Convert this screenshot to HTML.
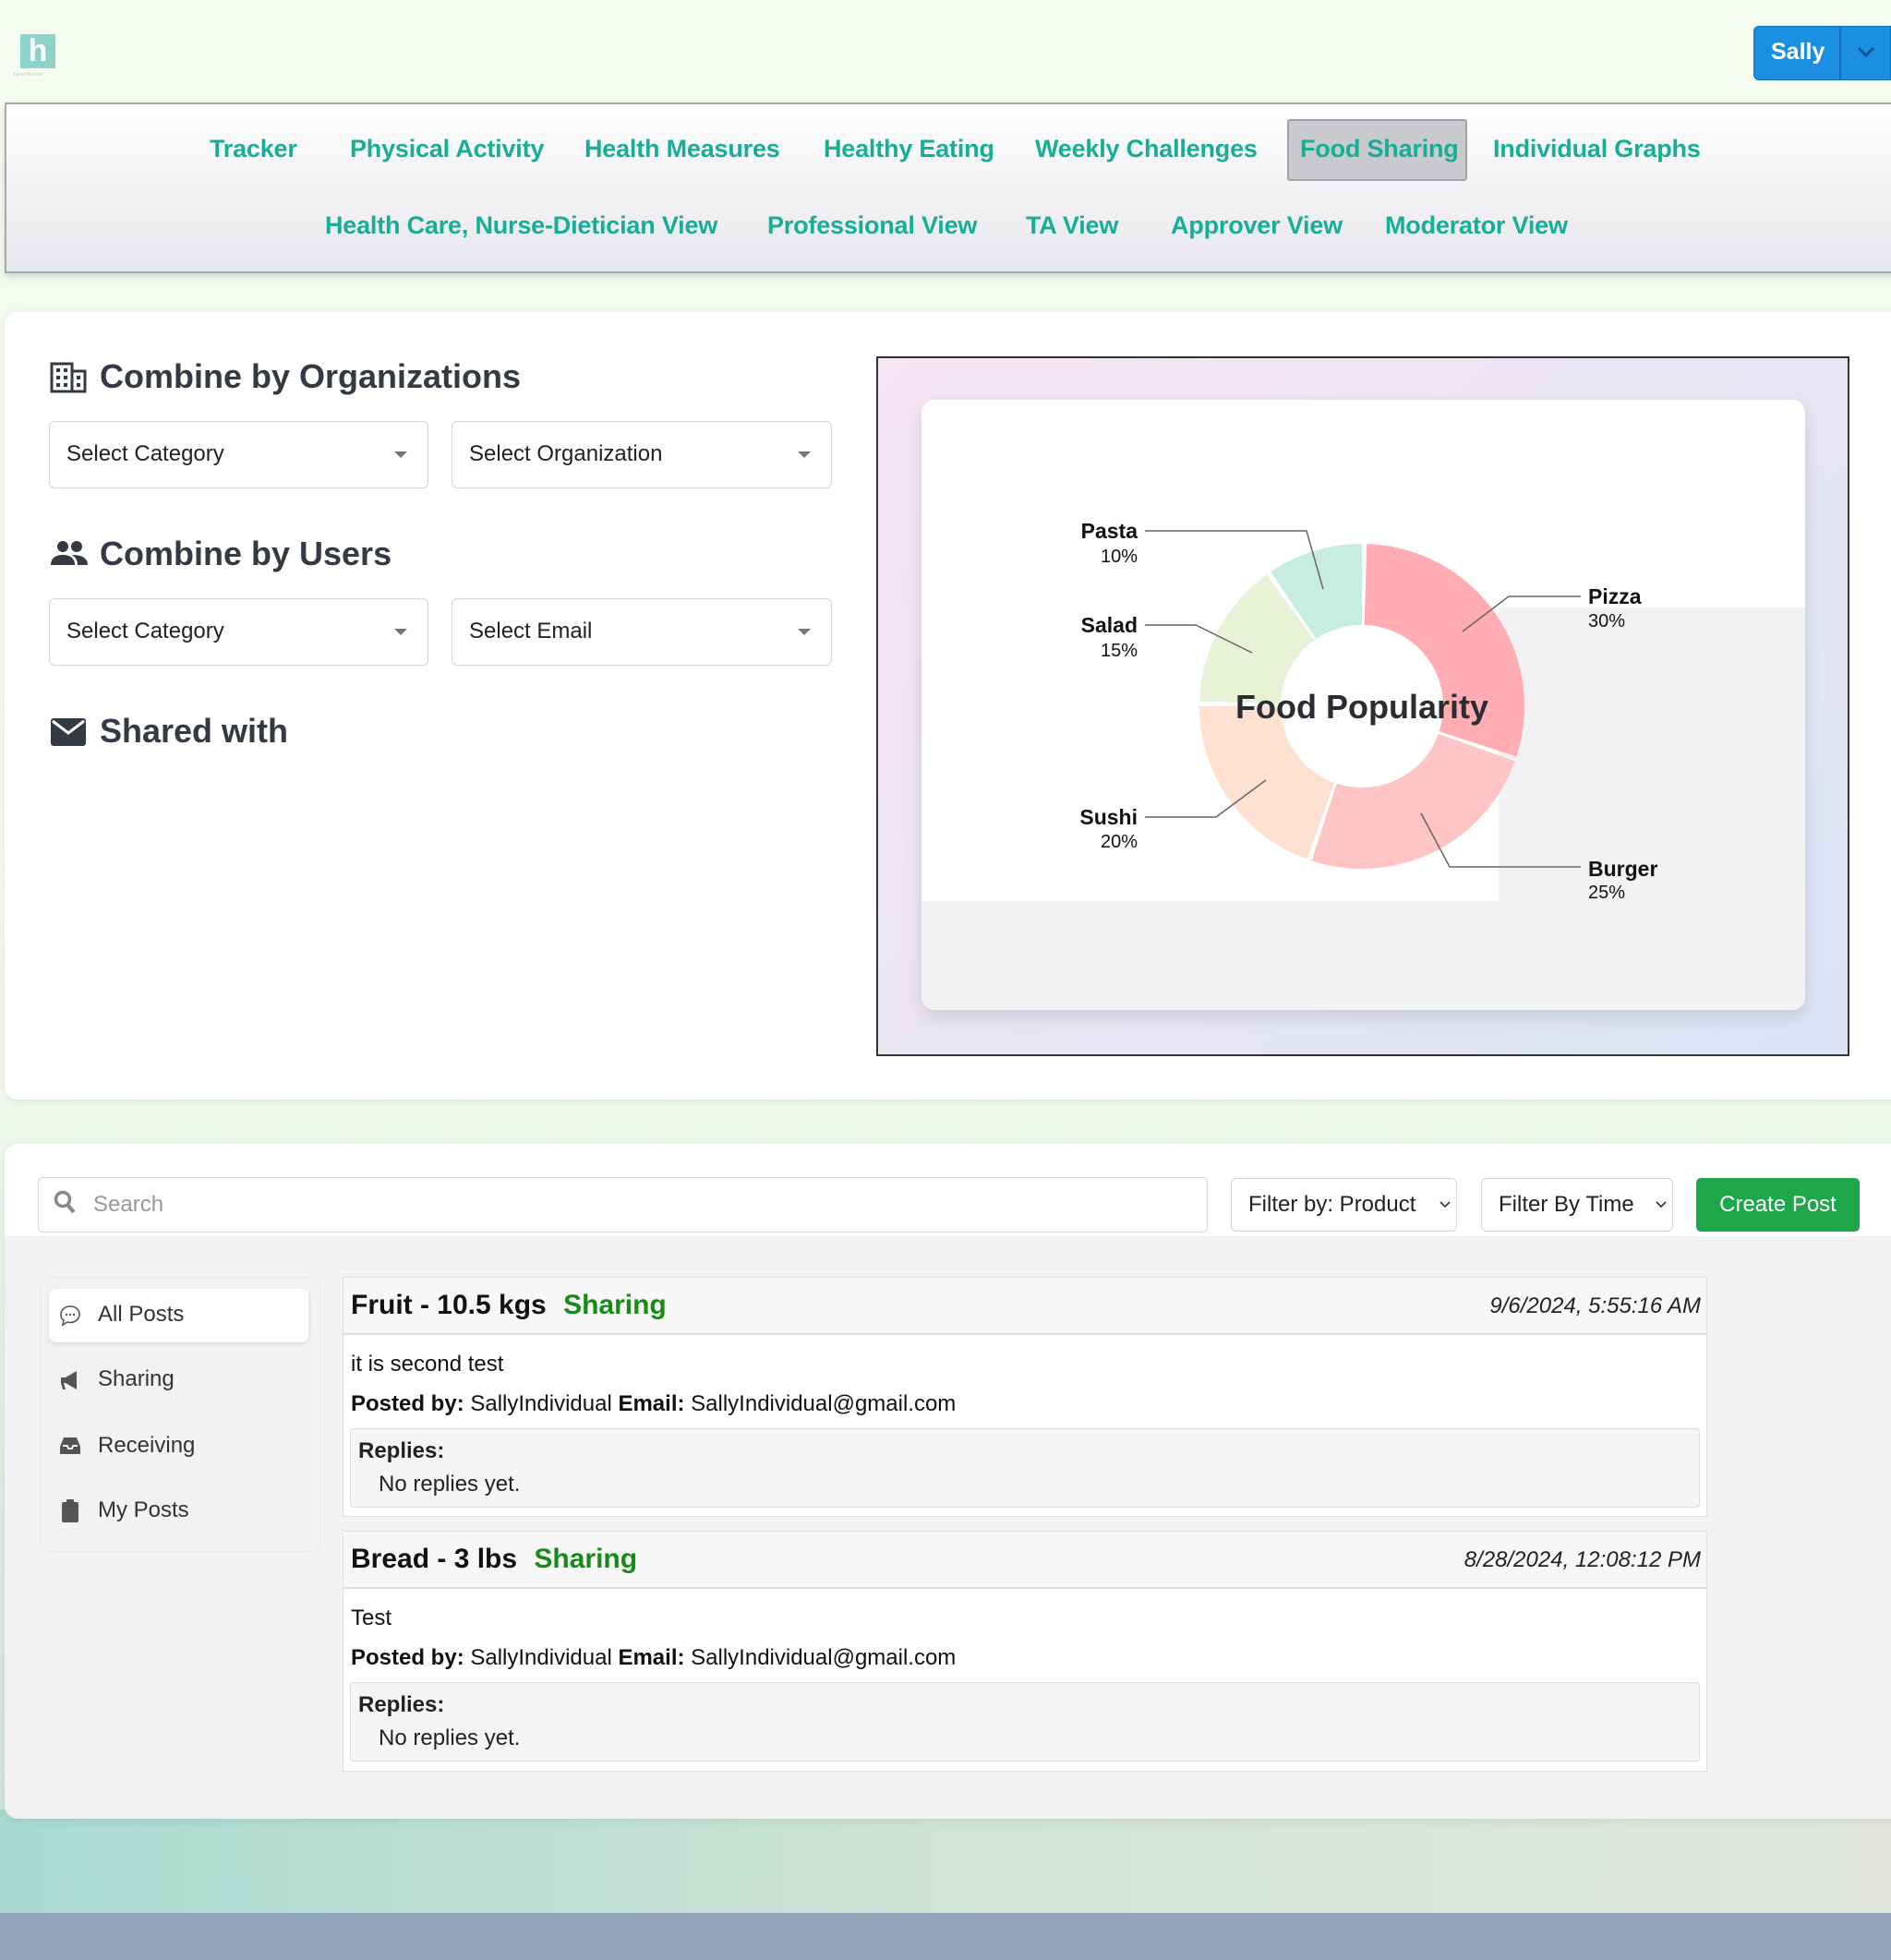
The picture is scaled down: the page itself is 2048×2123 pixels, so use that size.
<!DOCTYPE html>
<html><head><meta charset="utf-8"><style>
*{box-sizing:border-box;margin:0;padding:0}
body{width:2048px;height:2123px;position:relative;overflow:hidden;font-family:"Liberation Sans",Arial,sans-serif;background:linear-gradient(180deg,#f5fdf1 0%,#f1f9ee 55%,#e3f0e6 70%,#cfe6dc 92%,#b9ddd1 97%);color:#222}
.a{position:absolute}
.nav a{position:absolute;color:#16ae96;font-size:27px;text-decoration:none;white-space:nowrap;font-weight:bold;letter-spacing:-0.2px}
.sel{position:absolute;border:1.5px solid #d4d4d8;border-radius:6px;background:#fff;font-size:24px;color:#222;padding-left:18px;line-height:70px}
.sel.c::after{content:"";position:absolute;right:22px;top:32px;border-left:7px solid transparent;border-right:7px solid transparent;border-top:7px solid #777}
.h2{position:absolute;font-size:36px;font-weight:bold;color:#333a44}
.side{position:absolute;left:106px;font-size:24px;color:#333}
.post{position:absolute;left:371px;width:1478px;background:#fff;border:1.5px solid #e0e0e0}
.ph{height:62px;background:#f7f7f7;border-bottom:2px solid #ddd;position:relative}
.ph .t{position:absolute;left:8px;top:13px;font-size:30px;font-weight:bold;color:#111}
.ph .t span{color:#178a17;margin-left:10px}
.ph .d{position:absolute;right:6px;top:17px;font-size:24px;font-style:italic;color:#222}
.pb{font-size:24px;padding:0 8px;color:#111}
.rep{border:1.5px solid #ddd;background:#f5f5f5;border-radius:4px;padding:10px 8px;font-size:24px}
</style></head><body>
<div class="a" style="left:22px;top:37px;width:38px;height:37px;background:#8ed3c8;color:#fff;font-size:34px;text-align:center;line-height:36px;font-weight:bold">h</div>
<div class="a" style="left:15px;top:78px;font-size:5px;color:#bbb;letter-spacing:1px">healthnow</div>
<div class="a" style="left:1899px;top:28px;width:149px;height:59px;background:#1b8fe0;border:1.5px solid #1273c4;border-radius:6px 0 0 6px"></div>
<div class="a" style="left:1918px;top:42px;color:#fff;font-size:25px;font-weight:bold">Sally</div>
<div class="a" style="left:1992px;top:28px;width:2px;height:59px;background:#136fc0"></div>
<svg class="a" style="left:2010px;top:48px" width="22" height="16"><path d="M3 4 L11 12 L19 4" stroke="#0b4f99" stroke-width="3" fill="none"/></svg>
<div class="a" style="left:5px;top:111px;width:2050px;height:185px;background:linear-gradient(180deg,#fefefe,#e8e8ec);border:2px solid #a9a9ad;box-shadow:0 4px 8px rgba(0,0,0,.15)"></div>
<div class="a" style="left:1394px;top:129px;width:195px;height:67px;background:#c8cacd;border:2px solid #9fa2a6;border-radius:3px"></div>
<div class="nav">
<a style="left:227px;top:146px">Tracker</a>
<a style="left:379px;top:146px">Physical Activity</a>
<a style="left:633px;top:146px">Health Measures</a>
<a style="left:892px;top:146px">Healthy Eating</a>
<a style="left:1121px;top:146px">Weekly Challenges</a>
<a style="left:1408px;top:146px">Food Sharing</a>
<a style="left:1617px;top:146px">Individual Graphs</a>
<a style="left:352px;top:229px">Health Care, Nurse-Dietician View</a>
<a style="left:831px;top:229px">Professional View</a>
<a style="left:1111px;top:229px">TA View</a>
<a style="left:1268px;top:229px">Approver View</a>
<a style="left:1500px;top:229px">Moderator View</a>
</div>
<div class="a" style="left:5px;top:338px;width:2060px;height:853px;background:#fff;border-radius:14px;box-shadow:0 2px 10px rgba(0,0,0,.08)"></div>
<svg class="a" style="left:54px;top:390px" width="40" height="36" viewBox="0 0 40 36"><path d="M2 4h22v30H2z M24 12h14v22H24z" fill="none" stroke="#333a44" stroke-width="3"/><g fill="#333a44"><rect x="7" y="9" width="4" height="4"/><rect x="15" y="9" width="4" height="4"/><rect x="7" y="17" width="4" height="4"/><rect x="15" y="17" width="4" height="4"/><rect x="7" y="25" width="4" height="4"/><rect x="15" y="25" width="4" height="4"/><rect x="29" y="17" width="4" height="4"/><rect x="29" y="25" width="4" height="4"/></g></svg>
<div class="h2" style="left:108px;top:387px">Combine by Organizations</div>
<div class="sel c" style="left:53px;top:456px;width:411px;height:73px">Select Category</div>
<div class="sel c" style="left:489px;top:456px;width:412px;height:73px">Select Organization</div>
<svg class="a" style="left:53px;top:584px" width="44" height="32" viewBox="0 0 44 32"><g fill="#333a44"><circle cx="15" cy="8" r="6"/><circle cx="30" cy="8" r="6"/><path d="M2 28c0-8 6-11 13-11s13 3 13 11z"/><path d="M25 17c8 0 17 2 17 11H31c0-5-2-8-6-11z"/></g></svg>
<div class="h2" style="left:108px;top:579px">Combine by Users</div>
<div class="sel c" style="left:53px;top:648px;width:411px;height:73px">Select Category</div>
<div class="sel c" style="left:489px;top:648px;width:412px;height:73px">Select Email</div>
<svg class="a" style="left:54px;top:777px" width="40" height="32" viewBox="0 0 40 32"><rect x="1" y="1" width="38" height="30" rx="3" fill="#333a44"/><path d="M3 4 L20 17 L37 4" stroke="#fff" stroke-width="3" fill="none"/></svg>
<div class="h2" style="left:108px;top:771px">Shared with</div>
<div class="a" style="left:949px;top:386px;width:1054px;height:758px;border:2px solid #333;background:linear-gradient(135deg,#f6e5f2,#e8e6f4 55%,#dbe5f6)"></div>
<div class="a" style="left:998px;top:433px;width:957px;height:661px;background:#fff;border-radius:14px;box-shadow:0 8px 20px rgba(0,0,0,.12);overflow:hidden">
<div class="a" style="left:625px;top:225px;width:340px;height:320px;background:#f2f2f4"></div>
<div class="a" style="left:0;top:543px;width:960px;height:120px;background:#f2f2f4"></div>
</div>
<svg class="a" style="left:0;top:0" width="2048" height="1200">
<g transform="rotate(-90 1475 765)" fill="none" stroke-width="88">
<circle cx="1475" cy="765" r="132" stroke="#ffadb3" stroke-dasharray="244.8 829" stroke-dashoffset="-4"/>
<circle cx="1475" cy="765" r="132" stroke="#ffc4c4" stroke-dasharray="203.3 829" stroke-dashoffset="-252.8"/>
<circle cx="1475" cy="765" r="132" stroke="#ffe1d1" stroke-dasharray="161.9 829" stroke-dashoffset="-460.1"/>
<circle cx="1475" cy="765" r="132" stroke="#e8f2d7" stroke-dasharray="120.4 829" stroke-dashoffset="-626"/>
<circle cx="1475" cy="765" r="132" stroke="#c7ece0" stroke-dasharray="78.9 829" stroke-dashoffset="-750.4"/>
</g>
<circle cx="1475" cy="765" r="88" fill="#fff"/>
<g stroke="#666" stroke-width="1.5" fill="none">
<path d="M1240 575H1415L1433 638"/><path d="M1240 677H1295L1356 707"/><path d="M1240 885H1317L1371 845"/>
<path d="M1712 646H1634L1584 684"/><path d="M1712 939H1570L1539 881"/>
</g>
<g font-family="Liberation Sans,Arial,sans-serif" font-size="23" fill="#111">
<g font-weight="bold" text-anchor="end"><text x="1232" y="583">Pasta</text><text x="1232" y="685">Salad</text><text x="1232" y="893">Sushi</text></g>
<g text-anchor="end" font-size="20"><text x="1232" y="609">10%</text><text x="1232" y="711">15%</text><text x="1232" y="918">20%</text></g>
<g font-weight="bold"><text x="1720" y="654">Pizza</text><text x="1720" y="949">Burger</text></g>
<g font-size="20"><text x="1720" y="679">30%</text><text x="1720" y="973">25%</text></g>
<text x="1475" y="778" text-anchor="middle" font-size="36" font-weight="bold" fill="#2a2e33">Food Popularity</text>
</g>
</svg>
<div class="a" style="left:0;top:1960px;width:2048px;height:112px;background:linear-gradient(90deg,#a9dacf,#cfe3d6 50%,#e2e6de)"></div>
<div class="a" style="left:5px;top:1239px;width:2060px;height:731px;background:#f2f2f4;border-radius:14px;overflow:hidden;box-shadow:0 2px 10px rgba(0,0,0,.08)">
<div class="a" style="left:0;top:0;width:2060px;height:100px;background:#fff"></div>
</div>
<div class="a" style="left:41px;top:1275px;width:1267px;height:60px;border:1.5px solid #d4d4d8;border-radius:5px;background:#fff"></div>
<svg class="a" style="left:58px;top:1289px" width="26" height="28" viewBox="0 0 26 28"><circle cx="10" cy="10" r="7.5" stroke="#888" stroke-width="3.5" fill="none"/><path d="M15 16l7 8" stroke="#888" stroke-width="4"/></svg>
<div class="a" style="left:101px;top:1291px;font-size:24px;color:#999">Search</div>
<div class="sel" style="left:1333px;top:1276px;width:245px;height:58px;line-height:56px;padding-left:18px">Filter by: Product</div>
<svg class="a" style="left:1558px;top:1300px" width="14" height="10"><path d="M2 2l5 5 5-5" stroke="#333" stroke-width="1.6" fill="none"/></svg>
<div class="sel" style="left:1604px;top:1276px;width:208px;height:58px;line-height:56px;padding-left:18px">Filter By Time</div>
<svg class="a" style="left:1792px;top:1300px" width="14" height="10"><path d="M2 2l5 5 5-5" stroke="#333" stroke-width="1.6" fill="none"/></svg>
<div class="a" style="left:1837px;top:1276px;width:177px;height:58px;background:#1da64a;border-radius:5px;color:#fff;font-size:24px;text-align:center;line-height:58px">Create Post</div>
<div class="a" style="left:43px;top:1383px;width:304px;height:298px;background:#f2f2f4;border:1.5px solid #eaeaec;border-radius:10px"></div>
<div class="a" style="left:53px;top:1396px;width:281px;height:58px;background:#fff;border-radius:8px;box-shadow:0 2px 5px rgba(0,0,0,.1)"></div>
<svg class="a" style="left:64px;top:1413px" width="24" height="24" viewBox="0 0 24 24"><path d="M12 2C6 2 2 6 2 11c0 3 1 5 3 6l-1 5 5-3c1 0 2 .5 3 .5 6 0 10-4 10-9S18 2 12 2z" fill="none" stroke="#555" stroke-width="1.6"/><circle cx="8" cy="11" r="1.2" fill="#555"/><circle cx="12" cy="11" r="1.2" fill="#555"/><circle cx="16" cy="11" r="1.2" fill="#555"/></svg>
<div class="side" style="top:1410px">All Posts</div>
<svg class="a" style="left:64px;top:1483px" width="24" height="24" viewBox="0 0 24 24"><path d="M2 9h5l12-7v20L7 15H5l2 7H4l-2-7z" fill="#555"/></svg>
<div class="side" style="top:1480px">Sharing</div>
<svg class="a" style="left:64px;top:1555px" width="24" height="22" viewBox="0 0 24 22"><path d="M5 2h14l4 10v8H1v-8z" fill="#555"/><path d="M4 11h5l1 3h4l1-3h5" stroke="#fff" stroke-width="1.8" fill="none"/></svg>
<div class="side" style="top:1552px">Receiving</div>
<svg class="a" style="left:66px;top:1623px" width="20" height="26" viewBox="0 0 20 26"><rect x="1" y="4" width="18" height="22" rx="2" fill="#555"/><rect x="6" y="1" width="8" height="6" rx="1" fill="#555"/></svg>
<div class="side" style="top:1622px">My Posts</div>
<div class="post" style="top:1383px;height:260px">
<div class="ph"><div class="t">Fruit - 10.5 kgs <span>Sharing</span></div><div class="d">9/6/2024, 5:55:16 AM</div></div>
<div class="pb" style="margin-top:18px">it is second test</div>
<div class="pb" style="margin-top:15px"><b>Posted by:</b> SallyIndividual <b>Email:</b> SallyIndividual@gmail.com</div>
<div style="padding:12px 7px 0 7px"><div class="rep"><b>Replies:</b><div style="margin:8px 0 0 22px">No replies yet.</div></div></div>
</div>
<div class="post" style="top:1658px;height:261px">
<div class="ph"><div class="t">Bread - 3 lbs <span>Sharing</span></div><div class="d">8/28/2024, 12:08:12 PM</div></div>
<div class="pb" style="margin-top:18px">Test</div>
<div class="pb" style="margin-top:15px"><b>Posted by:</b> SallyIndividual <b>Email:</b> SallyIndividual@gmail.com</div>
<div style="padding:12px 7px 0 7px"><div class="rep"><b>Replies:</b><div style="margin:8px 0 0 22px">No replies yet.</div></div></div>
</div>
<div class="a" style="left:0;top:2072px;width:2048px;height:51px;background:#93a3b8"></div>
</body></html>
